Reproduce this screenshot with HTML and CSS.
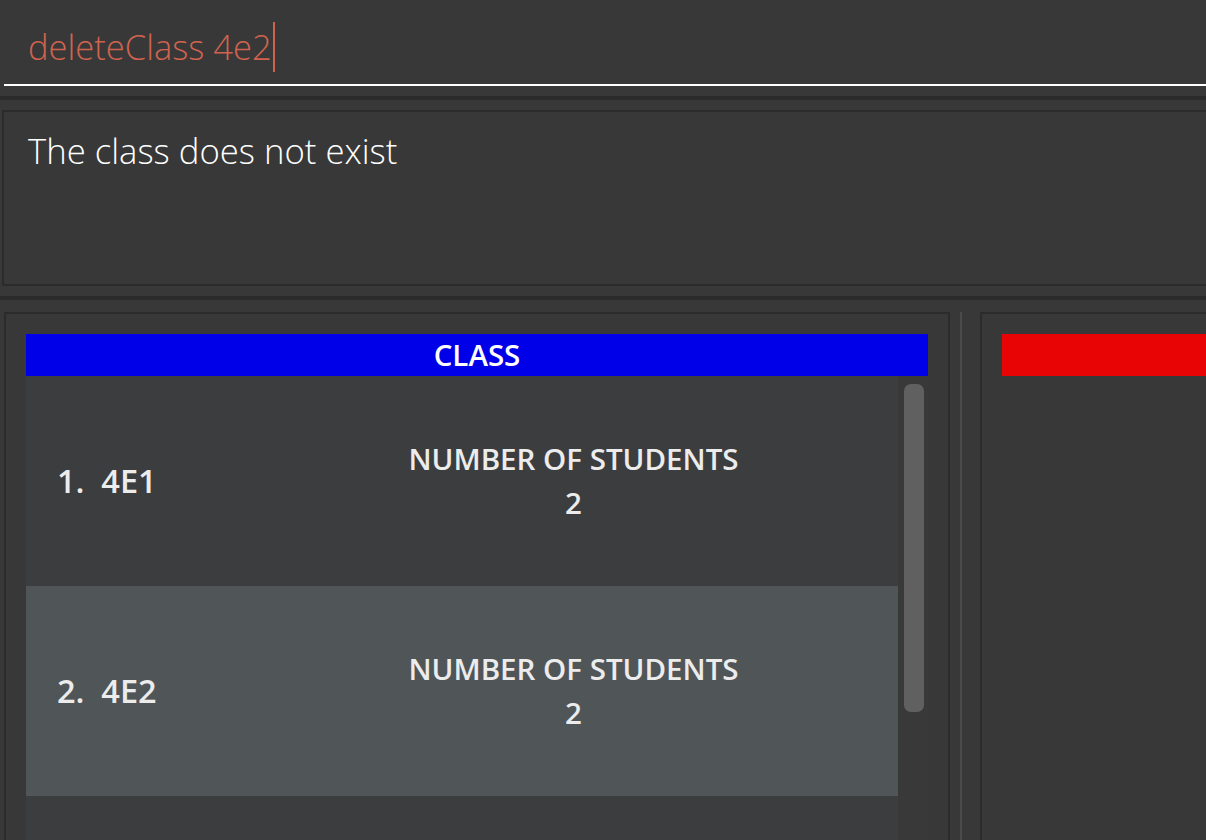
FILE: index.html
```html
<!DOCTYPE html>
<html>
<head>
<meta charset="utf-8">
<link rel="stylesheet" href="styles.css">
</head>
<body>
<div class="app">
  <div class="command">
    <div class="command-field"><span class="command-text">deleteClass 4e2</span><span class="caret"></span></div>
  </div>
  <div class="band"></div>
  <div class="result">The class does not exist</div>
  <div class="band band-lower"></div>
  <div class="panels">
    <div class="panel panel-left">
      <div class="header header-blue">CLASS</div>
      <div class="list">
        <div class="cells">
          <div class="cell">
            <div class="name">1.&nbsp;&nbsp;4E1</div>
            <div class="stats"><div>NUMBER OF STUDENTS</div><div>2</div></div>
          </div>
          <div class="cell cell-selected">
            <div class="name">2.&nbsp;&nbsp;4E2</div>
            <div class="stats"><div>NUMBER OF STUDENTS</div><div>2</div></div>
          </div>
          <div class="cell"></div>
        </div>
        <div class="scroll-track"><div class="scroll-thumb"></div></div>
      </div>
    </div>
    <div class="divider"></div>
    <div class="panel panel-right">
      <div class="header header-red"></div>
    </div>
  </div>
</div>
</body>
</html>
```
FILE: styles.css
```css
html, body {
  margin: 0;
  padding: 0;
  background: #383838;
  overflow: hidden;
}
.app {
  width: 1206px;
  height: 840px;
  display: flex;
  flex-direction: column;
  font-family: "Open Sans", "DejaVu Sans", sans-serif;
  overflow: hidden;
}
.command {
  padding-left: 4px;
  flex: 0 0 auto;
}
.command-field {
  height: 84px;
  border-bottom: 2px solid #ffffff;
  padding-left: 24px;
  display: flex;
  align-items: center;
  box-sizing: content-box;
}
.command-text {
  color: #d0634f;
  font-size: 34.5px;
  font-weight: 300;
  line-height: 40px;
  margin-top: 10px;
  white-space: nowrap;
}
.caret {
  width: 2px;
  height: 50px;
  background: #d0634f;
  margin-top: 10px;
  margin-left: 1px;
}
.band {
  height: 4px;
  background: #2b2b2b;
  margin-top: 10px;
  flex: 0 0 auto;
}
.result {
  margin: 10px 0 0 2px;
  border: 2px solid #2b2b2b;
  border-right: none;
  padding: 17px 0 0 24px;
  box-sizing: border-box;
  height: 176px;
  color: #ffffff;
  font-size: 34.7px;
  font-weight: 300;
  line-height: 44px;
  flex: 0 0 auto;
}
.band-lower {
  margin-top: 10px;
}
.panels {
  margin-top: 12px;
  display: flex;
  flex: 1 1 auto;
  padding-left: 4px;
}
.panel {
  border: 2px solid #2b2b2b;
  border-bottom: none;
  padding: 20px 20px 0 20px;
  display: flex;
  flex-direction: column;
}
.panel-left {
  width: 946px;
  box-sizing: border-box;
  flex: 0 0 auto;
}
.divider {
  width: 2px;
  background: #4b4b4b;
  margin: 0 18px 0 10px;
  flex: 0 0 auto;
}
.panel-right {
  flex: 1 0 auto;
  border-right: none;
  padding-right: 0;
}
.header {
  height: 42px;
  flex: 0 0 auto;
  color: #ffffff;
  font-weight: 600;
  font-size: 29.5px;
  line-height: 42px;
  text-align: center;
}
.header-blue { background: #0000e8; }
.header-red { background: #e80404; }
.list {
  flex: 1 1 auto;
  display: flex;
  background: #393939;
}
.cells {
  width: 872px;
  background: #3c3d3f;
}
.cell {
  height: 210px;
  display: flex;
  align-items: center;
  color: #ececec;
  font-weight: 600;
  white-space: nowrap;
}
.cell-selected {
  background: #505558;
}
.name {
  width: 364px;
  padding-left: 31px;
  box-sizing: border-box;
  font-size: 32.5px;
  line-height: 40px;
}
.stats {
  width: 367px;
  text-align: center;
  font-size: 29.5px;
  line-height: 44px;
  margin-top: 0;
}
.scroll-track {
  width: 30px;
  padding: 8px 4px 0 6px;
  box-sizing: border-box;
}
.scroll-thumb {
  height: 328px;
  background: #606060;
  border-radius: 7px;
}
```
